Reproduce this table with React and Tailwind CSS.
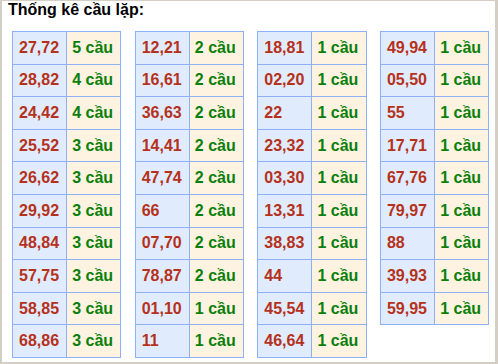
const tables = [
	[
		['27,72', 5],
		['28,82', 4],
		['24,42', 4],
		['25,52', 3],
		['26,62', 3],
		['29,92', 3],
		['48,84', 3],
		['57,75', 3],
		['58,85', 3],
		['68,86', 3],
	],
	[
		['12,21', 2],
		['16,61', 2],
		['36,63', 2],
		['14,41', 2],
		['47,74', 2],
		['66', 2],
		['07,70', 2],
		['78,87', 2],
		['01,10', 1],
		['11', 1],
	],
	[
		['18,81', 1],
		['02,20', 1],
		['22', 1],
		['23,32', 1],
		['03,30', 1],
		['13,31', 1],
		['38,83', 1],
		['44', 1],
		['45,54', 1],
		['46,64', 1],
	],
	[
		['49,94', 1],
		['05,50', 1],
		['55', 1],
		['17,71', 1],
		['67,76', 1],
		['79,97', 1],
		['88', 1],
		['39,93', 1],
		['59,95', 1],
	],
];

const App = () => {
	return (
		<div
			className="w-[498px] h-[364px] bg-white border-l-2 border-t border-r-[3px] border-b-2 border-[#d4cec4] overflow-hidden"
			style={{ fontFamily: '"Liberation Sans", Arial, sans-serif' }}>
			{/* Title */}
			<div className="pl-[6px] text-[16px] leading-[18px] font-bold text-black">Thống kê cầu lặp:</div>

			{/* Tables */}
			<div className="flex items-start gap-[13.33px] pl-[10px] mt-[12px]">
				{tables.map((rows, i) => (
					<div key={i} className="w-[109.33px] border-l border-t border-[#8db1f4]">
						{rows.map(([pair, count]) => (
							<div key={pair} className="grid grid-cols-2 h-[32.6px] text-[16px] font-bold">
								<div className="flex items-center pl-[6px] bg-[#e0ecfd] border-r border-b border-[#8db1f4] text-[#b5311b]">
									{pair}
								</div>
								<div className="flex items-center pl-[5px] bg-[#fef3e1] border-r border-b border-[#8db1f4] text-[#0b7f0b]">
									{count} cầu
								</div>
							</div>
						))}
					</div>
				))}
			</div>
		</div>
	);
};

export default App;
